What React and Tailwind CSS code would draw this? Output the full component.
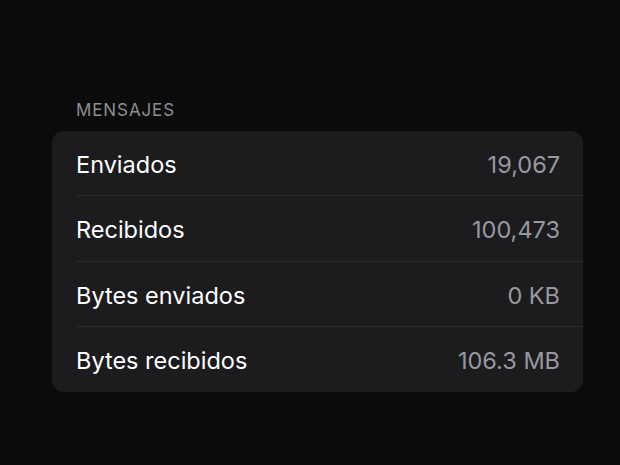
import React from 'react';

const rows = [
  { label: 'Enviados', value: '19,067' },
  { label: 'Recibidos', value: '100,473' },
  { label: 'Bytes enviados', value: '0 KB' },
  { label: 'Bytes recibidos', value: '106.3 MB' },
];

export default function App() {
  return (
    <div
      className="w-[620px] h-[465px] bg-[#0b0b0b] pt-[99px] px-[52px] overflow-hidden"
      style={{ fontFamily: 'Inter, "Noto Sans", sans-serif' }}
    >
      <div className="pl-6 text-[17px] leading-[22px] text-[#8d8d92] tracking-[0.9px] mb-[10px]">MENSAJES</div>
      <div className="bg-[#1c1c1e] rounded-[12px] w-[531px]">
        {rows.map((r, i) => (
          <div key={r.label} className="pl-6">
            <div
              className={
                'h-[65.25px] flex items-center justify-between pr-[23px] pt-[3px] ' +
                (i < rows.length - 1 ? 'border-b border-[#2c2c2e]' : '')
              }
            >
              <span className="text-[23.5px] text-white tracking-[0px]">{r.label}</span>
              <span className="text-[23.5px] text-[#98989e] tracking-[0px]">{r.value}</span>
            </div>
          </div>
        ))}
      </div>
    </div>
  );
}
